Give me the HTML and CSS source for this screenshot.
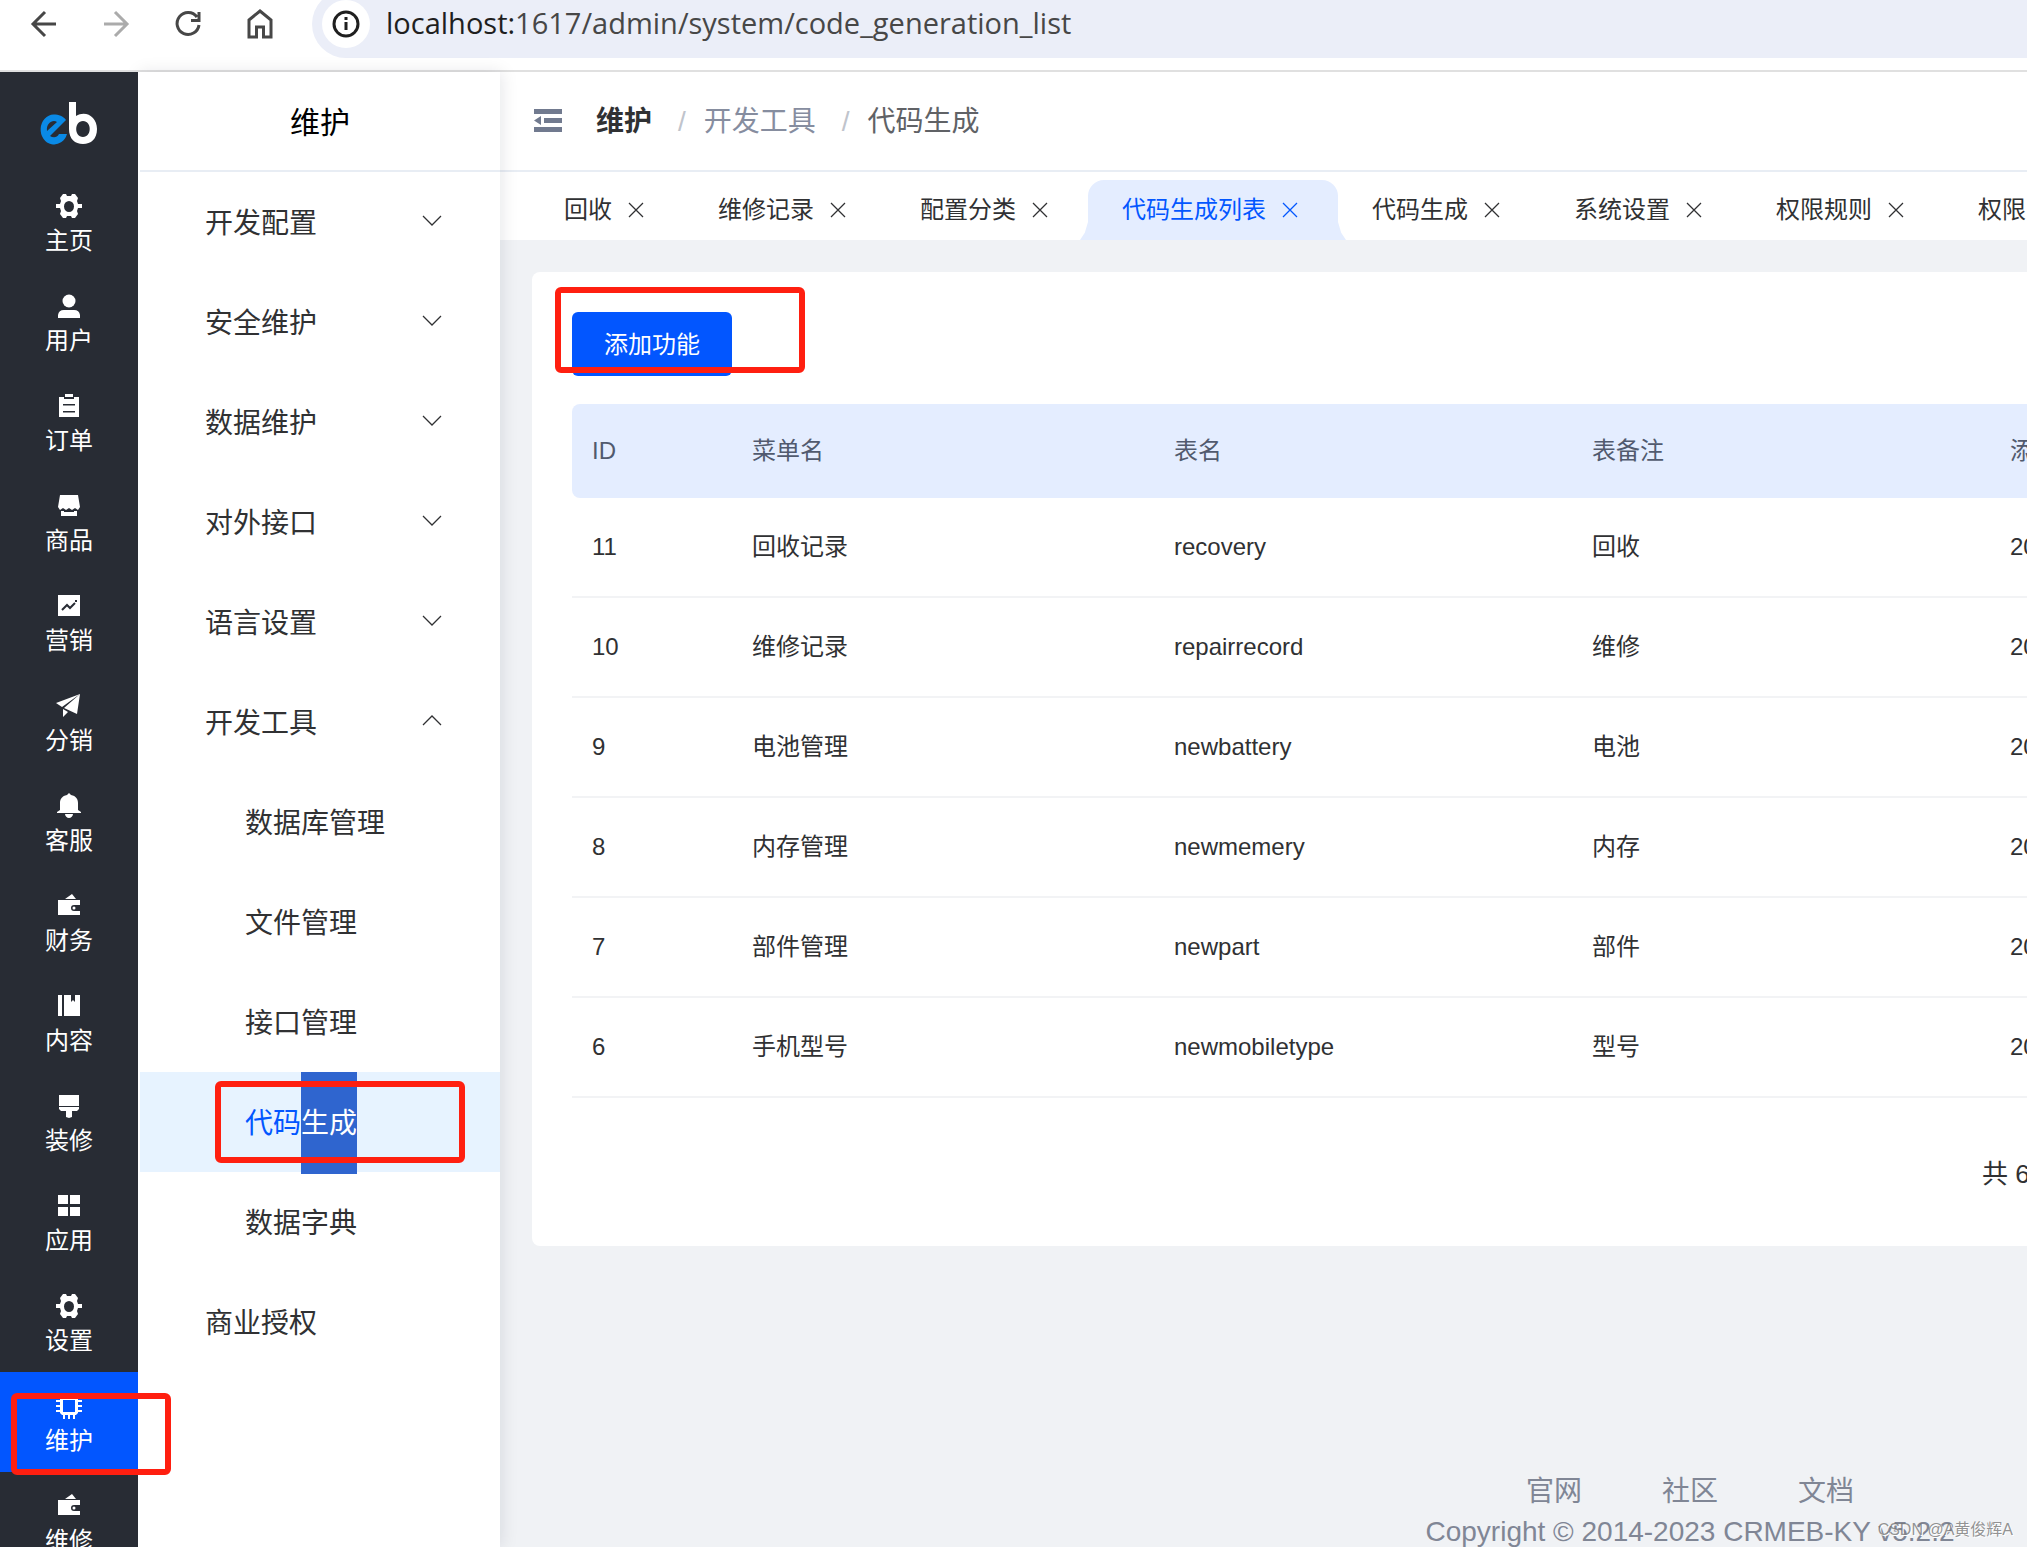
FILE: index.html
```html
<!DOCTYPE html>
<html lang="zh-CN">
<head>
<meta charset="utf-8">
<title>代码生成列表</title>
<link rel="stylesheet" href="styles.css">
</head>
<body>
<svg class="sprite" aria-hidden="true">
  <symbol id="i-gear" viewBox="0 0 26 26"><path fill-rule="evenodd" d="M7 1h3l1 2h4l1-2h3l3 4-1 3 1 3h4v4h-4l-1 3 1 3-3 4h-3l-1-2h-4l-1 2H7l-3-4 1-3-1-3H0v-4h4l1-3-1-3zM13 8a5 5.500 0 1 0 0 11 5 5.500 0 1 0 0-11z"/></symbol>
  <symbol id="i-user" viewBox="0 0 26 26"><circle cx="13" cy="8" r="6.500"/><path d="M2 25v-3a6 6 0 0 1 6-5h10a6 6 0 0 1 6 5v3z"/></symbol>
  <symbol id="i-order" viewBox="0 0 26 26"><path fill-rule="evenodd" d="M3 4h5v2h10V4h5v20H3zM7 11v1.500h12V11zM7 18v1.500h12V18z"/><path d="M9 1h8v3H9z"/></symbol>
  <symbol id="i-shop" viewBox="0 0 26 26"><path d="M4 2h18l2 12-2 3-3-2-3 2-3-2-3 2-3-2-3 2-2-3z"/><path d="M5 18h3v1h10v-1h3v5H5z"/></symbol>
  <symbol id="i-chart" viewBox="0 0 26 26"><path d="M2 2h22v21H2z"/><path class="cut" d="M6 17l5-5 3 3 5-5"/><path class="cut" d="M19 8h2"/></symbol>
  <symbol id="i-plane" viewBox="0 0 26 26"><path d="M24 1L0 10l6 4zM24 1L8 15l13 6zM7 16v8l5-5z"/></symbol>
  <symbol id="i-bell" viewBox="0 0 26 26"><path d="M13 0l2 2c5 1 7 4 7 8v7l3 2v1H1v-1l3-2v-7c0-4 2-7 7-8zM9 21h8c0 2-2 4-4 4s-4-2-4-4z"/></symbol>
  <symbol id="i-wallet" viewBox="0 0 26 26"><path fill-rule="evenodd" d="M9 6l7-5 4 5zM2 7h22v5h-6a3 3 0 0 0 0 6h6v4H2z"/><circle cx="18" cy="15" r="1.500"/></symbol>
  <symbol id="i-book" viewBox="0 0 26 26"><path d="M2 2h4v21H2zM8 2h7v7l2-2 2 2V2h5v21H8z"/></symbol>
  <symbol id="i-brush" viewBox="0 0 26 26"><path d="M3 2h20v11H3zM3 14h20v2l-2 2h-5v6l-3 1-3-1v-6H5l-2-2z"/></symbol>
  <symbol id="i-apps" viewBox="0 0 26 26"><path d="M2 2h10v9H2zM14 2h10v9H14zM2 14h10v9H2zM14 14h10v9H14z"/></symbol>
  <symbol id="i-chip" viewBox="0 0 26 26"><path fill-rule="evenodd" d="M4 4h3V0h2v4h3V0h2v4h3V0h2v4h3v3h4v2h-4v3h4v2h-4v3h4v2h-4v1l-2 2h-1v4h-2v-4h-3v4h-2v-4H9v4H7v-4H6l-2-2v-1H0v-2h4v-3H0v-2h4V9H0V7h4zM7 7v12h12V7z"/></symbol>
  <symbol id="i-down" viewBox="0 0 20 12"><path class="line" d="M1 1l9 9 9-9"/></symbol>
  <symbol id="i-up" viewBox="0 0 20 12"><path class="line" d="M1 10l9-9 9 9"/></symbol>
  <symbol id="i-close" viewBox="0 0 16 16"><path class="line" d="M1 1l14 14M15 1L1 15"/></symbol>
</svg>

<header class="browser">
  <button class="tool" aria-label="后退"><svg viewBox="0 0 32 32"><path class="bar-line" d="M28 16H6M17 4L5 16l12 12"/></svg></button>
  <button class="tool tool-off" aria-label="前进"><svg viewBox="0 0 32 32"><path class="bar-line" d="M4 16h22M15 4l12 12-12 12"/></svg></button>
  <button class="tool" aria-label="刷新"><svg viewBox="0 0 32 32"><path class="bar-line" d="M27 17a11 11 0 1 1-2-8M27 4v8.500h-8"/></svg></button>
  <button class="tool" aria-label="主页"><svg viewBox="0 0 32 32"><path class="bar-line" d="M5 12L16 3l11 9v17h-7.500V19h-7v10H5z"/></svg></button>
  <div class="address">
    <span class="info"><svg viewBox="0 0 32 32"><circle class="bar-line" cx="16" cy="16" r="12"/><path class="bar-line" d="M16 14v8M16 9v3"/></svg></span>
    <span class="url"><span class="host">localhost:</span>1617/admin/system/code_generation_list</span>
  </div>
</header>

<div class="app">
  <nav class="rail">
    <a class="logo" href="#" aria-label="eb"><svg viewBox="0 0 60 46"><path class="logo-e" d="M14.500 13.500A13.500 15 0 1 0 28 33h-8c-2 4-6 4-9 2L27 19c-3-4-7-5.500-12.500-5.500zM8 30c-1-8 6-12 10-9z"/><path class="logo-b" fill-rule="evenodd" d="M30 1h7v14c10-6 21 1 21 13 0 10-6 15-14 15s-14-5-14-15zm14 19c-9 0-9 16 0 16s9-16 0-16z"/></svg></a>
    <a class="rail-item" href="#"><svg><use href="#i-gear"/></svg><span>主页</span></a>
    <a class="rail-item" href="#"><svg><use href="#i-user"/></svg><span>用户</span></a>
    <a class="rail-item" href="#"><svg><use href="#i-order"/></svg><span>订单</span></a>
    <a class="rail-item" href="#"><svg><use href="#i-shop"/></svg><span>商品</span></a>
    <a class="rail-item" href="#"><svg><use href="#i-chart"/></svg><span>营销</span></a>
    <a class="rail-item" href="#"><svg><use href="#i-plane"/></svg><span>分销</span></a>
    <a class="rail-item" href="#"><svg><use href="#i-bell"/></svg><span>客服</span></a>
    <a class="rail-item" href="#"><svg><use href="#i-wallet"/></svg><span>财务</span></a>
    <a class="rail-item" href="#"><svg><use href="#i-book"/></svg><span>内容</span></a>
    <a class="rail-item" href="#"><svg><use href="#i-brush"/></svg><span>装修</span></a>
    <a class="rail-item" href="#"><svg><use href="#i-apps"/></svg><span>应用</span></a>
    <a class="rail-item" href="#"><svg><use href="#i-gear"/></svg><span>设置</span></a>
    <a class="rail-item rail-on" href="#"><svg><use href="#i-chip"/></svg><span>维护</span><i class="mark mark-rail"></i></a>
    <a class="rail-item" href="#"><svg><use href="#i-wallet"/></svg><span>维修</span></a>
  </nav>

  <nav class="menu">
    <h1 class="menu-title">维护</h1>
    <a class="menu-item" href="#">开发配置<svg><use href="#i-down"/></svg></a>
    <a class="menu-item" href="#">安全维护<svg><use href="#i-down"/></svg></a>
    <a class="menu-item" href="#">数据维护<svg><use href="#i-down"/></svg></a>
    <a class="menu-item" href="#">对外接口<svg><use href="#i-down"/></svg></a>
    <a class="menu-item" href="#">语言设置<svg><use href="#i-down"/></svg></a>
    <a class="menu-item" href="#">开发工具<svg><use href="#i-up"/></svg></a>
    <a class="menu-item menu-sub" href="#">数据库管理</a>
    <a class="menu-item menu-sub" href="#">文件管理</a>
    <a class="menu-item menu-sub" href="#">接口管理</a>
    <a class="menu-item menu-sub menu-on" href="#">代码<span class="picked">生成</span><i class="mark mark-menu"></i></a>
    <a class="menu-item menu-sub" href="#">数据字典</a>
    <a class="menu-item" href="#">商业授权</a>
  </nav>

  <div class="stage">
    <div class="page">
      <div class="topbar">
        <button class="fold" aria-label="收起菜单"><svg viewBox="0 0 28 24"><path d="M0 0h28v5H0zM10 9h18v5H10zM0 18h28v5H0zM0 11.500L7 7v9z"/></svg></button>
        <ol class="crumbs">
          <li><a class="crumb-root" href="#">维护</a></li>
          <li><a class="crumb-mid" href="#">开发工具</a></li>
          <li>代码生成</li>
        </ol>
      </div>
      <div class="tabs">
        <button class="tab">回收<svg><use href="#i-close"/></svg></button>
        <button class="tab">维修记录<svg><use href="#i-close"/></svg></button>
        <button class="tab">配置分类<svg><use href="#i-close"/></svg></button>
        <button class="tab tab-on">代码生成列表<svg><use href="#i-close"/></svg></button>
        <button class="tab">代码生成<svg><use href="#i-close"/></svg></button>
        <button class="tab">系统设置<svg><use href="#i-close"/></svg></button>
        <button class="tab">权限规则<svg><use href="#i-close"/></svg></button>
        <button class="tab">权限</button>
      </div>
      <main class="card">
        <div class="actions"><button class="add">添加功能</button><i class="mark mark-add"></i></div>
        <table class="list">
          <colgroup><col class="c-id"><col class="c-name"><col class="c-table"><col class="c-note"><col></colgroup>
          <thead><tr><th>ID</th><th>菜单名</th><th>表名</th><th>表备注</th><th>添加时间</th></tr></thead>
          <tbody>
            <tr><td>11</td><td>回收记录</td><td>recovery</td><td>回收</td><td>2023</td></tr>
            <tr><td>10</td><td>维修记录</td><td>repairrecord</td><td>维修</td><td>2023</td></tr>
            <tr><td>9</td><td>电池管理</td><td>newbattery</td><td>电池</td><td>2023</td></tr>
            <tr><td>8</td><td>内存管理</td><td>newmemery</td><td>内存</td><td>2023</td></tr>
            <tr><td>7</td><td>部件管理</td><td>newpart</td><td>部件</td><td>2023</td></tr>
            <tr><td>6</td><td>手机型号</td><td>newmobiletype</td><td>型号</td><td>2023</td></tr>
          </tbody>
        </table>
        <div class="pager"><span class="total">共 6 条</span></div>
      </main>
      <footer class="foot">
        <div class="links"><a href="#">官网</a><a href="#">社区</a><a href="#">文档</a></div>
        <p>Copyright © 2014-2023 CRMEB-KY v5.2.2</p>
      </footer>
    </div>
    <span class="watermark">CSDN @A黄俊辉A</span>
  </div>
</div>
</body>
</html>
```
FILE: styles.css
```css
* { box-sizing: border-box; }

body {
  margin: 0;
  height: 100vh;
  display: flex;
  flex-direction: column;
  overflow: hidden;
  background: #fff;
  color: #303133;
  font-family: "Liberation Sans", "Noto Sans CJK SC", sans-serif;
  font-size: 24px;
}

a { color: inherit; text-decoration: none; }
button { border: 0; padding: 0; background: none; font: inherit; color: inherit; }
svg { display: block; fill: currentColor; }
.sprite { position: absolute; width: 0; height: 0; }
.line { fill: none; stroke: currentColor; stroke-width: 1.25; }
.cut { fill: none; stroke: #282c34; stroke-width: 2; }

/* Browser toolbar */
.browser {
  flex: none;
  display: flex;
  align-items: flex-start;
  height: 72px;
  padding-left: 28px;
  border-bottom: 2px solid #e0e0e0;
  color: #474747;
  overflow: hidden;
}
.tool { flex: none; width: 32px; height: 32px; margin: 8px 40px 0 0; }
.tool:nth-of-type(4) { margin-right: 36px; }
.tool svg { width: 32px; height: 32px; }
.tool-off { color: #ababab; }
.bar-line { fill: none; stroke: currentColor; stroke-width: 3; }
.address {
  flex: 1;
  display: flex;
  align-items: center;
  height: 68px;
  margin-top: -10px;
  padding-left: 10px;
  border-radius: 34px 0 0 34px;
  background: #ebeef8;
}
.info {
  display: flex;
  align-items: center;
  justify-content: center;
  width: 48px;
  height: 48px;
  border-radius: 50%;
  background: #fff;
  color: #1f1f1f;
}
.info svg { width: 32px; height: 32px; }
.url { margin-left: 16px; padding-bottom: 2px; font: 29px/40px "Open Sans", sans-serif; }
.host { color: #1f1f1f; }

/* Application frame */
.app { flex: 1; display: flex; min-height: 0; }
.rail {
  flex: none;
  width: 138px;
  display: flex;
  flex-direction: column;
  background: #282c34;
  color: #fff;
  position: relative;
  z-index: 3;
}
.logo { flex: none; display: flex; height: 100px; padding: 29px 0 0 39px; }
.logo svg { width: 60px; height: 46px; }
.logo-e { fill: #0a8ae6; fill-rule: evenodd; }
.logo-b { fill: #fff; }
.rail-item {
  flex: none;
  display: flex;
  flex-direction: column;
  align-items: center;
  height: 100px;
  padding-top: 21px;
  line-height: 36px;
  position: relative;
}
.rail-item svg { width: 26px; height: 26px; margin-bottom: 4px; }
.rail-on { background: #0256ff; }

.menu {
  flex: none;
  width: 362px;
  padding-left: 2px;
  background: #fff;
  box-shadow: 2px 0 16px rgba(0, 21, 41, 0.1);
  position: relative;
  z-index: 2;
}
.menu-title {
  height: 100px;
  margin: 0;
  border-bottom: 2px solid #e8edf4;
  color: #000;
  font-size: 30px;
  font-weight: 400;
  line-height: 102px;
  text-align: center;
}
.menu-item {
  display: flex;
  align-items: center;
  height: 100px;
  padding: 4px 58px 0 65px;
  font-size: 28px;
  line-height: 96px;
  position: relative;
}
.menu-item svg { width: 20px; height: 12px; margin: 0 0 6px auto; }
.menu-sub { padding-left: 105px; }
.menu-on { background: #e7f3ff; color: #0256ff; }
.picked {
  align-self: flex-start;
  height: 102px;
  margin-top: -4px;
  background: #2f65cf;
  color: #fff;
  line-height: 104px;
}

/* Hand-drawn callout frames lying over the controls */
.mark {
  position: absolute;
  width: 250px;
  height: 82px;
  border: 6px solid #ff1f10;
  border-radius: 6px;
}
.mark-rail { left: 11px; top: 21px; width: 160px; }
.mark-menu { left: 75px; top: 9px; }
.mark-add { left: -17px; top: -25px; height: 86px; }

/* Content area, wider than the window and clipped by it */
.stage { flex: 1; min-width: 0; overflow: hidden; background: #f0f2f5; position: relative; }
.page { min-width: 2380px; }
.topbar {
  display: flex;
  align-items: center;
  height: 100px;
  padding: 0 34px;
  border-bottom: 2px solid #e8edf4;
  background: #fff;
}
.fold { width: 28px; height: 24px; color: #717a8f; }
.crumbs {
  display: flex;
  margin: 0;
  padding: 2px 0 0 34px;
  list-style: none;
  color: #606266;
  font-size: 28px;
  line-height: 40px;
}
.crumbs li + li::before { content: "/"; margin: 0 18px 0 26px; color: #c0c4cc; }
.crumb-root { color: #303133; font-weight: 700; }
.crumb-mid { color: #868d9f; }

.tabs {
  display: flex;
  align-items: flex-end;
  height: 68px;
  padding-left: 30px;
  background: #fff;
}
.tab {
  flex: none;
  display: flex;
  align-items: center;
  gap: 16px;
  height: 60px;
  padding: 0 40px 0 34px;
  line-height: 36px;
  position: relative;
}
.tab svg { width: 16px; height: 16px; }
.tab-on { border-radius: 16px 16px 0 0; background: #e4edff; color: #0256ff; }
.tab-on::before,
.tab-on::after {
  content: "";
  position: absolute;
  bottom: 0;
  width: 8px;
  height: 18px;
  background: #e4edff;
}
.tab-on::before { right: 100%; clip-path: polygon(100% 0, 100% 100%, 0 100%, 60% 60%); }
.tab-on::after { left: 100%; clip-path: polygon(0 0, 0 100%, 100% 100%, 40% 60%); }

.card {
  margin: 32px;
  padding: 40px;
  border-radius: 8px;
  background: #fff;
}
.actions { position: relative; margin-bottom: 28px; }
.add {
  display: block;
  width: 160px;
  height: 64px;
  padding-bottom: 4px;
  border-radius: 6px;
  background: #0256ff;
  color: #fff;
}
.list {
  width: 100%;
  table-layout: fixed;
  border-collapse: separate;
  border-spacing: 0;
}
.c-id { width: 160px; }
.c-name { width: 422px; }
.c-table, .c-note { width: 418px; }
.list th, .list td { padding: 0 20px; text-align: left; line-height: 36px; }
.list th { height: 94px; background: #e4edff; color: #515a6e; font-weight: 400; }
.list th:first-child { border-radius: 8px 0 0 8px; }
.list th:last-child { border-radius: 0 8px 8px 0; }
.list td { height: 100px; border-bottom: 2px solid #f2f3f5; }
.pager { display: flex; justify-content: flex-end; padding: 56px 0 12px; }
.total { width: 826px; font-size: 26px; line-height: 40px; }

.foot {
  padding-top: 194px;
  color: #808695;
  font-size: 28px;
  line-height: 40px;
  text-align: center;
}
.links { display: flex; justify-content: center; gap: 80px; }
.foot p { margin: 0; }
.watermark {
  position: absolute;
  right: 14px;
  bottom: 2px;
  color: rgba(120, 120, 120, 0.8);
  font-size: 16px;
  line-height: 30px;
  text-shadow: 1px 1px 0 #fff;
}
```
